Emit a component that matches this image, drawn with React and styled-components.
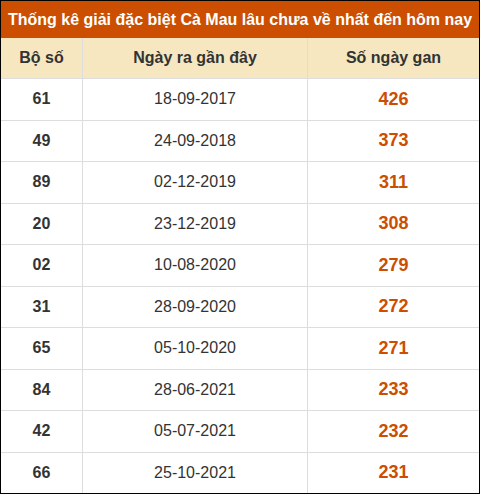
import React from 'react';
import styled, { createGlobalStyle } from 'styled-components';

const GlobalStyle = createGlobalStyle`
  html, body {
    margin: 0;
    padding: 0;
    background: #fff;
    font-family: "Liberation Sans", Arial, sans-serif;
  }
`;

const Table = styled.div`
  width: 480px;
  box-sizing: border-box;
  border: 1px solid #000;
  background: #fff;
`;

const Title = styled.div`
  height: 37px;
  background: #cc4e00;
  color: #fff;
  font-size: 16px;
  font-weight: bold;
  display: flex;
  align-items: center;
  justify-content: center;
  white-space: nowrap;
`;

const Row = styled.div`
  display: grid;
  grid-template-columns: 81px 225px 1fr;
  height: ${props => (props.head ? '40px' : '41.5px')};
  background: ${props => (props.head ? '#f6e7c1' : '#fff')};
  box-sizing: border-box;
  border-top: ${props => (props.head ? 'none' : '1px solid #ddd')};
`;

const Cell = styled.div`
  display: flex;
  align-items: center;
  justify-content: center;
  border-left: ${props => (props.first ? 'none' : '1px solid #ddd')};
  color: ${props => (props.accent ? '#cc4e00' : '#333')};
  font-size: ${props => props.size || '16px'};
  font-weight: ${props => (props.bold ? 'bold' : 'normal')};
`;

const rows = [
  ['61', '18-09-2017', '426'],
  ['49', '24-09-2018', '373'],
  ['89', '02-12-2019', '311'],
  ['20', '23-12-2019', '308'],
  ['02', '10-08-2020', '279'],
  ['31', '28-09-2020', '272'],
  ['65', '05-10-2020', '271'],
  ['84', '28-06-2021', '233'],
  ['42', '05-07-2021', '232'],
  ['66', '25-10-2021', '231'],
];

export default function App() {
  return (
    <>
      <GlobalStyle />
      <Table>
        <Title>Thống kê giải đặc biệt Cà Mau lâu chưa về nhất đến hôm nay</Title>
        <Row head>
          <Cell first bold>Bộ số</Cell>
          <Cell bold>Ngày ra gần đây</Cell>
          <Cell bold>Số ngày gan</Cell>
        </Row>
        {rows.map(([num, date, gan]) => (
          <Row key={num}>
            <Cell first bold>{num}</Cell>
            <Cell>{date}</Cell>
            <Cell bold accent size="18px">{gan}</Cell>
          </Row>
        ))}
      </Table>
    </>
  );
}
